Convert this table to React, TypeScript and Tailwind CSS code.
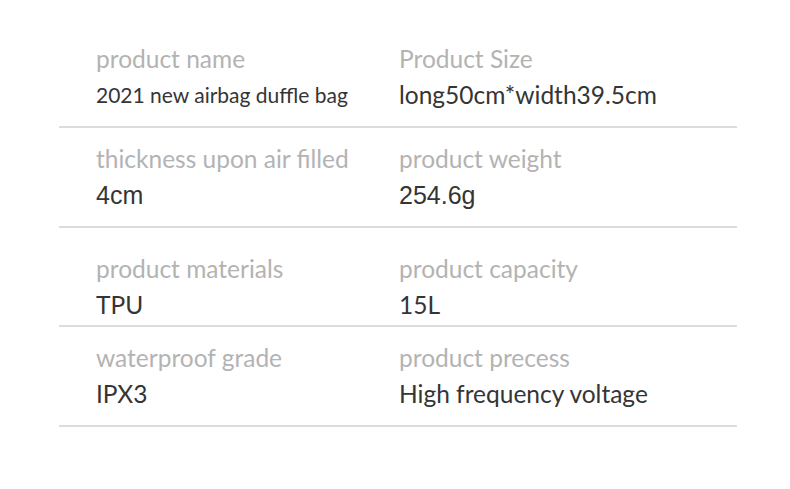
export default function App() {
  const rows = [
    {
      a: ["product name", "2021 new airbag duffle bag", "text-[21px]"],
      b: ["Product Size", "long50cm*width39.5cm", "text-[24.5px]"],
    },
    {
      a: ["thickness upon air filled", "4cm", "text-[25px] font-['Liberation_Sans',sans-serif]"],
      b: ["product weight", "254.6g", "text-[25px] font-['Liberation_Sans',sans-serif]"],
    },
    {
      a: ["product materials", "TPU", "text-[24.5px]"],
      b: ["product capacity", "15L", "text-[24.5px]"],
    },
    {
      a: ["waterproof grade", "IPX3", "text-[24.5px]"],
      b: ["product precess", "High frequency voltage", "text-[24.5px]"],
    },
  ];

  return (
    <div className="w-[790px] h-[489px] bg-white pt-[28px] font-['Lato','Liberation_Sans',sans-serif]">
      <div className="ml-[59px] w-[678px]">
        {rows.map((r, i) => (
          <div
            key={i}
            className={`border-b-2 border-[#dcdcdc] grid grid-cols-[303px_1fr] pl-[37px] ${
              i === 2 ? "h-[99px]" : "h-[100px]"
            }`}
          >
            {[r.a, r.b].map((c, j) => (
              <div key={j} className={i === 2 ? "pt-[26px]" : "pt-[16px]"}>
                <div className="text-[24.5px] leading-[30px] text-[#b3b3b3]">{c[0]}</div>
                <div className={`mt-[6px] leading-[30px] text-[#353535] ${c[2]}`}>{c[1]}</div>
              </div>
            ))}
          </div>
        ))}
      </div>
    </div>
  );
}
